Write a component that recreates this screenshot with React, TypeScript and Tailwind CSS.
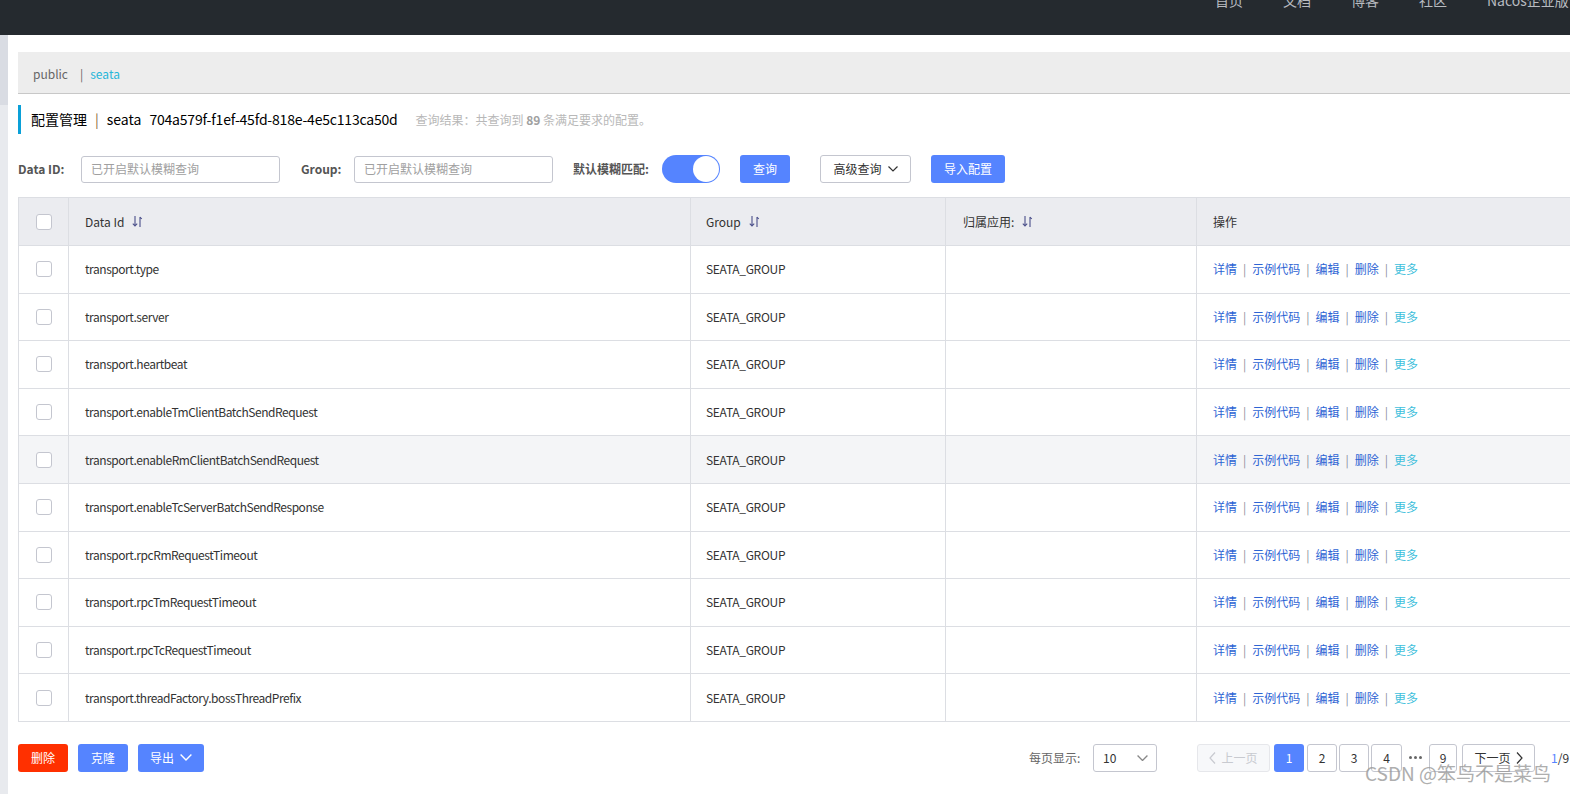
import React from "react";

const rows = [
  "transport.type",
  "transport.server",
  "transport.heartbeat",
  "transport.enableTmClientBatchSendRequest",
  "transport.enableRmClientBatchSendRequest",
  "transport.enableTcServerBatchSendResponse",
  "transport.rpcRmRequestTimeout",
  "transport.rpcTmRequestTimeout",
  "transport.rpcTcRequestTimeout",
  "transport.threadFactory.bossThreadPrefix",
];

const font = {
  fontFamily: '"Noto Sans CJK SC", "Noto Sans", sans-serif',
};

function SortIcon() {
  return (
    <svg width="11" height="13" viewBox="0 0 11 13" className="ml-[8px]">
      <path d="M3 1v10M0.8 8.6L3 11l2.2-2.4" stroke="#4a4f8a" strokeWidth="1.1" fill="none" />
      <path d="M8 12V2M8 2l1.8 2" stroke="#4a4f8a" strokeWidth="1.1" fill="none" />
    </svg>
  );
}

function Chevron({ color = "#333", size = 10 }: { color?: string; size?: number }) {
  return (
    <svg width={size} height={size * 0.6} viewBox="0 0 10 6">
      <path d="M0.5 0.5L5 5l4.5-4.5" stroke={color} strokeWidth="1.2" fill="none" />
    </svg>
  );
}

function SideChevron({ dir, color }: { dir: "left" | "right"; color: string }) {
  return (
    <svg width="7" height="12" viewBox="0 0 7 12">
      <path
        d={dir === "left" ? "M6 0.5L1 6l5 5.5" : "M1 0.5L6 6l-5 5.5"}
        stroke={color}
        strokeWidth="1.2"
        fill="none"
      />
    </svg>
  );
}

function Checkbox() {
  return <div className="w-[16px] h-[16px] rounded-[3px] border border-[#c4c6cf] bg-white" />;
}

function Actions() {
  return (
    <div className="flex items-center text-[12px]">
      <span className="text-[#2d64d4]">详情</span>
      <span className="text-[#8a8f9c] mx-[6px]">|</span>
      <span className="text-[#2d64d4]">示例代码</span>
      <span className="text-[#8a8f9c] mx-[6px]">|</span>
      <span className="text-[#2d64d4]">编辑</span>
      <span className="text-[#8a8f9c] mx-[6px]">|</span>
      <span className="text-[#2d64d4]">删除</span>
      <span className="text-[#8a8f9c] mx-[6px]">|</span>
      <span className="text-[#3fbfdc]">更多</span>
    </div>
  );
}

export default function App() {
  return (
    <div className="w-[1570px] h-[794px] overflow-hidden bg-white relative text-[#333]" style={font}>
      {/* Top nav */}
      <div className="h-[35px] bg-[#252a2f] flex justify-end overflow-hidden">
        <div className="flex items-start -mt-[10px] text-[14px] text-[#b8bbc0] gap-[40px]">
          <span>首页</span>
          <span>文档</span>
          <span>博客</span>
          <span>社区</span>
          <span className="w-[83px] overflow-hidden whitespace-nowrap">Nacos企业版</span>
        </div>
      </div>

      <div className="flex">
        {/* Left strip */}
        <div className="w-[8px] shrink-0 flex flex-col">
          <div className="h-[70px] bg-[#d9dce3]" />
          <div className="h-[700px] bg-[#e8eaee]" />
        </div>

        <div className="w-[1563px] shrink-0 ml-[10px] pt-[17px]">
          {/* Breadcrumb */}
          <div className="h-[42px] bg-[#ededed] border-b border-[#c8c8c8] flex items-center pl-[15px] pt-[3px] text-[12px]">
            <span className="text-[#666] w-[47px]">public</span>
            <span className="text-[#666] mr-[7px]">|</span>
            <span className="text-[#26b6d9]">seata</span>
          </div>

          {/* Title */}
          <div className="mt-[11px] h-[29px] border-l-[3px] border-[#0aa0d8] pl-[10px] flex items-center">
            <span className="text-[14px] text-black">配置管理</span>
            <span className="text-[14px] text-[#8a6a3a] mx-[8px]">|</span>
            <span className="text-[14px] text-black">seata</span>
            <span className="text-[14px] text-black ml-[8px] tracking-[-0.2px]">
              704a579f-f1ef-45fd-818e-4e5c113ca50d
            </span>
            <span className="text-[12px] text-[#b8b8b8] ml-[18px]">
              查询结果：共查询到 <b className="text-[#a0a0a0]">89</b> 条满足要求的配置。
            </span>
          </div>

          {/* Search bar */}
          <div className="mt-[21px] h-[28px] flex items-center text-[12px]">
            <span className="font-bold text-[#555] w-[63px]">Data ID:</span>
            <div className="w-[199px] h-[27px] border border-[#c4c6cf] rounded-[3px] flex items-center pl-[9px] text-[#a0a0a0]">
              已开启默认模糊查询
            </div>
            <span className="font-bold text-[#555] ml-[21px] w-[53px]">Group:</span>
            <div className="w-[199px] h-[27px] border border-[#c4c6cf] rounded-[3px] flex items-center pl-[9px] text-[#a0a0a0]">
              已开启默认模糊查询
            </div>
            <span className="font-bold text-[#555] ml-[20px] w-[89px]">默认模糊匹配:</span>
            <div className="w-[58px] h-[28px] rounded-full bg-[#5584ff] flex items-center justify-end pr-[1px]">
              <div className="w-[26px] h-[26px] rounded-full bg-white" />
            </div>
            <div className="ml-[20px] w-[50px] h-[28px] rounded-[3px] bg-[#5584ff] text-white flex items-center justify-center">
              查询
            </div>
            <div className="ml-[30px] w-[91px] h-[28px] rounded-[3px] border border-[#c4c6cf] flex items-center justify-center gap-[6px] text-[#333]">
              高级查询
              <Chevron />
            </div>
            <div className="ml-[20px] w-[74px] h-[28px] rounded-[3px] bg-[#5584ff] text-white flex items-center justify-center">
              导入配置
            </div>
          </div>

          {/* Table */}
          <div className="mt-[14px] border-l border-t border-[#dcdee3] text-[12px]">
            <div className="grid grid-cols-[50px_622px_255px_251px_1fr] h-[48px] bg-[#ebecf0] border-b border-[#dcdee3]">
              <div className="flex items-center justify-center border-r border-[#dcdee3]">
                <Checkbox />
              </div>
              <div className="flex items-center pl-[16px] border-r border-[#dcdee3]">
                Data Id
                <SortIcon />
              </div>
              <div className="flex items-center pl-[15px] border-r border-[#dcdee3]">
                Group
                <SortIcon />
              </div>
              <div className="flex items-center pl-[17px] border-r border-[#dcdee3]">
                归属应用:
                <SortIcon />
              </div>
              <div className="flex items-center pl-[16px]">操作</div>
            </div>
            {rows.map((r, i) => (
              <div
                key={r}
                className={`grid grid-cols-[50px_622px_255px_251px_1fr] h-[47.6px] border-b border-[#dcdee3] ${
                  i === 4 ? "bg-[#f4f5f7]" : "bg-white"
                }`}
              >
                <div className="flex items-center justify-center border-r border-[#dcdee3]">
                  <Checkbox />
                </div>
                <div className="flex items-center pl-[16px] border-r border-[#dcdee3] tracking-[-0.45px]">{r}</div>
                <div className="flex items-center pl-[15px] border-r border-[#dcdee3] tracking-[-0.3px]">SEATA_GROUP</div>
                <div className="border-r border-[#dcdee3]" />
                <div className="flex items-center pl-[16px]">
                  <Actions />
                </div>
              </div>
            ))}
          </div>

          {/* Footer */}
          <div className="mt-[22px] h-[28px] flex items-center text-[12px]">
            <div className="w-[50px] h-[28px] rounded-[3px] bg-[#ff3000] text-white flex items-center justify-center">
              删除
            </div>
            <div className="ml-[10px] w-[50px] h-[28px] rounded-[3px] bg-[#5584ff] text-white flex items-center justify-center">
              克隆
            </div>
            <div className="ml-[10px] w-[66px] h-[28px] rounded-[3px] bg-[#5584ff] text-white flex items-center justify-center gap-[6px]">
              导出
              <Chevron color="#fff" size={12} />
            </div>

            <div className="ml-[825px] flex items-center shrink-0">
              <span className="text-[#666] w-[64px]">每页显示:</span>
              <div className="w-[64px] h-[28px] border border-[#c4c6cf] rounded-[3px] flex items-center justify-between pl-[9px] pr-[8px] text-[#333]">
                10
                <Chevron color="#888" size={11} />
              </div>
              <div className="ml-[40px] w-[73px] h-[28px] rounded-[3px] border border-[#e6e7eb] bg-[#f7f8fa] text-[#c8cad0] flex items-center justify-center gap-[5px]">
                <SideChevron dir="left" color="#c8cad0" />
                上一页
              </div>
              <div className="ml-[4px] w-[30px] h-[28px] rounded-[3px] bg-[#5584ff] text-white flex items-center justify-center">1</div>
              <div className="ml-[3px] w-[30px] h-[28px] rounded-[3px] border border-[#c4c6cf] flex items-center justify-center">2</div>
              <div className="ml-[2px] w-[30px] h-[28px] rounded-[3px] border border-[#c4c6cf] flex items-center justify-center">3</div>
              <div className="ml-[2px] w-[31px] h-[28px] rounded-[3px] border border-[#c4c6cf] flex items-center justify-center">4</div>
              <div className="w-[27px] flex items-center justify-center gap-[2px]">
                <div className="w-[3px] h-[3px] rounded-full bg-[#666]" />
                <div className="w-[3px] h-[3px] rounded-full bg-[#666]" />
                <div className="w-[3px] h-[3px] rounded-full bg-[#666]" />
              </div>
              <div className="w-[28px] h-[28px] rounded-[3px] border border-[#c4c6cf] flex items-center justify-center">9</div>
              <div className="ml-[5px] w-[73px] h-[28px] rounded-[3px] border border-[#c4c6cf] flex items-center justify-center gap-[5px]">
                下一页
                <SideChevron dir="right" color="#333" />
              </div>
              <span className="ml-[16px] whitespace-nowrap">
                <span className="text-[#5584ff]">1</span>/9
              </span>
            </div>
          </div>
        </div>
      </div>

      {/* Watermark */}
      <div className="absolute left-[1365px] top-[759px] text-[19px] text-[#9a9a9a] opacity-80 whitespace-nowrap">
        CSDN @笨鸟不是菜鸟
      </div>
    </div>
  );
}
